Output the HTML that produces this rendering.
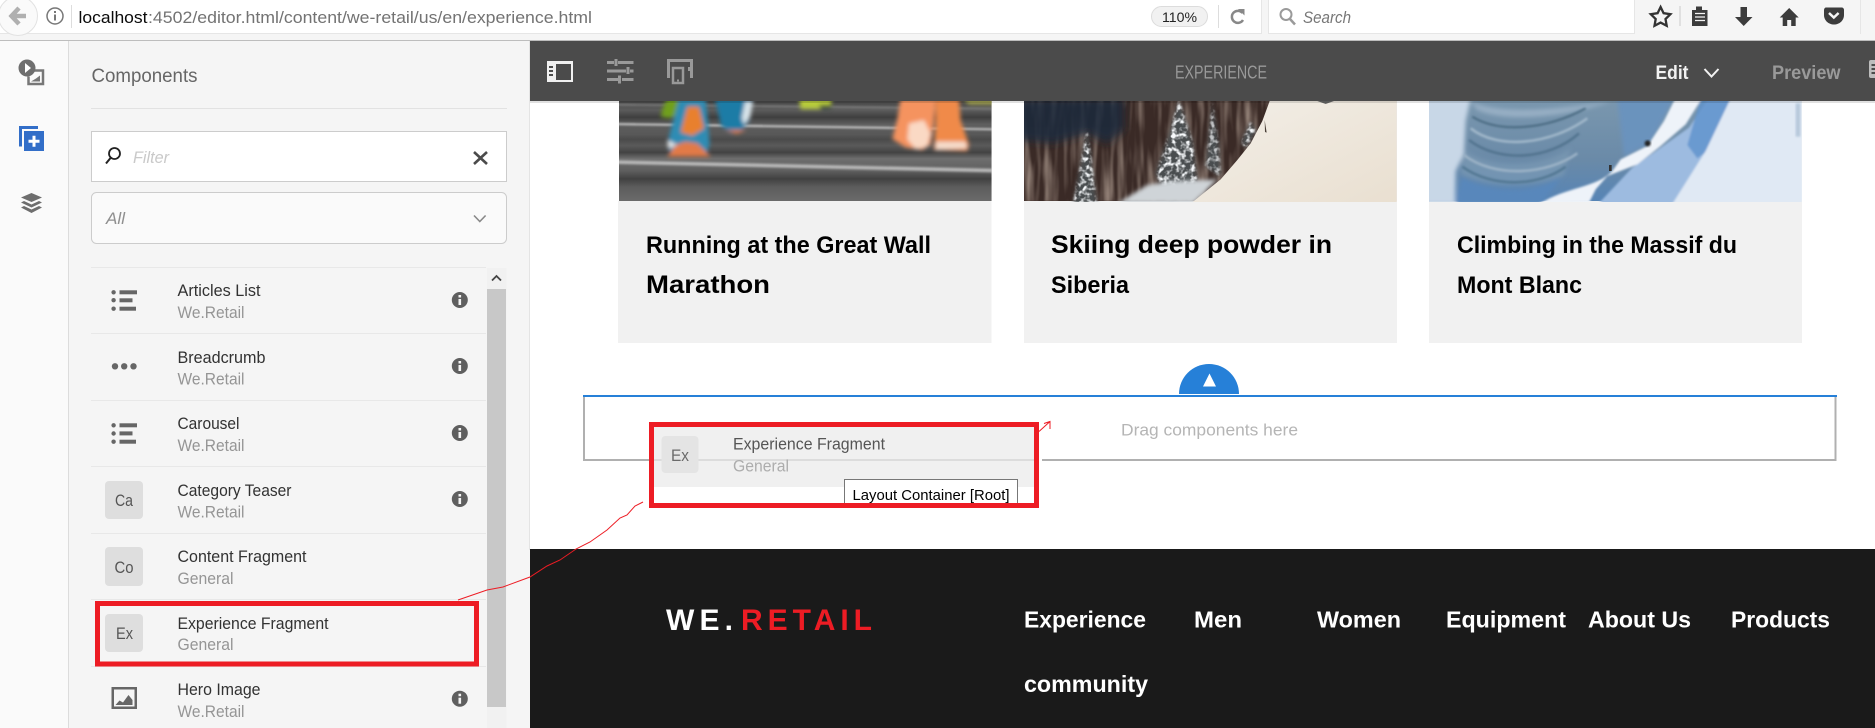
<!DOCTYPE html>
<html lang="en"><head><meta charset="utf-8"><title>AEM editor</title>
<style>html,body{margin:0;padding:0;background:#fff;width:1875px;height:728px;overflow:hidden}svg{display:block}text{font-family:"Liberation Sans",sans-serif}</style></head><body>
<svg xmlns="http://www.w3.org/2000/svg" width="1875" height="728" viewBox="0 0 1875 728">
<defs>
<filter id="b0" x="-20%" y="-20%" width="140%" height="140%"><feGaussianBlur stdDeviation="3"/></filter>
<filter id="b1" x="-20%" y="-20%" width="140%" height="140%"><feGaussianBlur stdDeviation="6"/></filter>
<filter id="b2" x="-20%" y="-20%" width="140%" height="140%"><feGaussianBlur stdDeviation="12"/></filter>
<filter id="streak" x="0" y="0" width="100%" height="100%"><feTurbulence type="fractalNoise" baseFrequency=".05 .006" numOctaves="2" seed="3"/><feColorMatrix values="0 0 0 0 .62  0 0 0 0 .5  0 0 0 0 .42  1.8 0 0 0 -.75"/><feGaussianBlur stdDeviation="1.500"/></filter>
<filter id="speck" x="-10%" y="-10%" width="120%" height="120%"><feTurbulence type="fractalNoise" baseFrequency=".07" numOctaves="2" seed="8"/><feColorMatrix values="0 0 0 0 .93  0 0 0 0 .95  0 0 0 0 .97  3.500 0 0 0 -1.500" result="n"/><feGaussianBlur in="SourceAlpha" stdDeviation="4" result="a"/><feComposite in="n" in2="a" operator="in"/></filter>
<clipPath id="c"><rect x="0" y="3" width="1118" height="303"/></clipPath>
<clipPath id="tt"><rect x="840" y="470" width="190" height="35"/></clipPath>
<linearGradient id="road" x1="0" y1="0" x2="0" y2="1">
<stop offset="0" stop-color="#444"/><stop offset=".1" stop-color="#5c5c5c"/><stop offset=".17" stop-color="#3f3f3f"/><stop offset=".24" stop-color="#5e5e5e"/><stop offset=".34" stop-color="#585858"/><stop offset=".39" stop-color="#4a4a4a"/><stop offset=".45" stop-color="#5a5a5a"/><stop offset=".52" stop-color="#434343"/><stop offset=".58" stop-color="#6e6e6e"/><stop offset=".7" stop-color="#5f5f5f"/><stop offset=".78" stop-color="#414141"/><stop offset=".86" stop-color="#5c5c5c"/><stop offset="1" stop-color="#6a6a6a"/></linearGradient>
<linearGradient id="snow" x1="0" y1="0" x2="1" y2="1"><stop offset="0" stop-color="#f3efe8"/><stop offset="1" stop-color="#e9dfd0"/></linearGradient>
<linearGradient id="ice" x1="0" y1="0" x2="0" y2="1"><stop offset="0" stop-color="#7a97ae"/><stop offset=".6" stop-color="#6a8aa8"/><stop offset="1" stop-color="#5684b5"/></linearGradient>
</defs>

<!-- browser chrome -->
<rect x="0" y="0" width="1875" height="41" fill="#f5f5f5"/>
<rect x="0" y="0" width="1261" height="33" fill="#fff"/>
<rect x="1269" y="0" width="365" height="33" fill="#fff"/>
<rect x="0" y="33" width="1261" height="1" fill="#e6e6e6"/>
<rect x="1269" y="33" width="365" height="1" fill="#e6e6e6"/>
<rect x="1261" y="0" width="1" height="34" fill="#e6e6e6"/><rect x="1268" y="0" width="1" height="34" fill="#e6e6e6"/><rect x="1634" y="0" width="1" height="34" fill="#e6e6e6"/>
<rect x="0" y="40" width="1875" height="1" fill="#bdbdbd"/>
<circle cx="18" cy="16" r="19.5" fill="#fafafa" stroke="#e2e2e2"/>
<path d="M19 8 11.500 16l7.500 8M12 16H26" fill="none" stroke="#b0b0b0" stroke-width="4.500"/>
<circle cx="55" cy="16" r="8" fill="none" stroke="#777" stroke-width="1.500"/>
<rect x="54" y="14.500" width="2" height="6" fill="#777"/><rect x="54" y="11" width="2" height="2" fill="#777"/>
<rect x="71" y="5" width="1" height="23" fill="#ddd"/>
<text x="78.500" y="23" font-size="17" fill="#0a0a0a" textLength="69" lengthAdjust="spacingAndGlyphs">localhost</text>
<text x="148" y="23" font-size="17" fill="#737373" textLength="444" lengthAdjust="spacingAndGlyphs">:4502/editor.html/content/we-retail/us/en/experience.html</text>
<rect x="1151.500" y="6.500" width="56" height="20" rx="10" fill="#f1f1f1" stroke="#dcdcdc"/>
<text x="1162" y="22" font-size="14" fill="#222" textLength="35" lengthAdjust="spacingAndGlyphs">110%</text>
<rect x="1218" y="5" width="1" height="23" fill="#ddd"/>
<path d="M1242.500 13a6 6 0 1 0 .5 7" fill="none" stroke="#888" stroke-width="2.500"/><path d="M1238 9h6.500v6.500z" fill="#888"/>
<circle cx="1286" cy="14.500" r="5.500" fill="none" stroke="#9a9a9a" stroke-width="2"/><path d="M1290 19l5 5.500" stroke="#9a9a9a" stroke-width="2.500"/>
<text x="1303" y="23" font-size="17" font-style="italic" fill="#777" textLength="48" lengthAdjust="spacingAndGlyphs">Search</text>
<path d="M1660.600 7l3 6.200 6.800 1-4.900 4.800 1.200 6.800-6.100-3.200-6.100 3.200 1.200-6.800-4.900-4.800 6.800-1z" fill="none" stroke="#333" stroke-width="2.300"/>
<rect x="1679.500" y="6" width="1" height="20" fill="#ccc"/>
<path d="M1692 10h4v-3.500h6V10h5.500v16H1692z" fill="#3c3c3c"/><path d="M1695 13.500h10M1695 17h10M1695 20.500h10" stroke="#f5f5f5" stroke-width="1.200"/>
<path d="M1740.500 7h6.500v10h5.500l-8.800 9-8.700-9h5.500z" fill="#3c3c3c"/>
<path d="M1789.200 8l9.500 9.500h-3V26h-4.500v-6h-4v6h-4.500v-8.500h-3z" fill="#3c3c3c"/>
<path d="M1826 7.500h15.500c1.500 0 2.500 1 2.500 2.500v5c0 5.500-4.500 9.500-10 9.500s-10-4-10-9.500v-5c0-1.500 1-2.500 2-2.500z" fill="#3c3c3c"/><path d="M1829 13l4.800 4.500 4.800-4.500" fill="none" stroke="#f5f5f5" stroke-width="2.500"/>
<rect x="1860" y="0" width="1" height="34" fill="#e6e6e6"/>

<!-- left rail + panel -->
<rect x="0" y="41" width="69" height="687" fill="#fafafa"/>
<rect x="68" y="41" width="1" height="687" fill="#dcdcdc"/>
<rect x="69" y="41" width="461" height="687" fill="#f5f5f5"/>
<path d="M34 70.500h9v13.500H28.500V76.500" fill="none" stroke="#777" stroke-width="2.500"/><path d="M31 81.500h9v-6l-4 3z" fill="#777"/>
<circle cx="27" cy="68" r="8.500" fill="#6e6e6e"/><path d="M25 63l6 5-6 5z" fill="#fff"/>
<path d="M38 127.500H20.500v19" fill="none" stroke="#326ec8" stroke-width="3"/><rect x="24" y="131" width="20" height="20" fill="#326ec8"/><path d="M28.500 141.200h11M34 135.800v11" stroke="#fff" stroke-width="3"/>
<g fill="#6e6e6e"><path d="M31.500 193l10.500 4.500-10.500 4.500-10.500-4.500z"/><path d="M21 202.500l3-1.500 7.500 3.500 7.500-3.500 3 1.500-10.500 5z"/><path d="M21 207.500l3-1.500 7.500 3.500 7.500-3.500 3 1.500-10.500 5.500z"/></g>

<text x="91.500" y="82" font-size="19" fill="#666" textLength="106" lengthAdjust="spacingAndGlyphs">Components</text>
<rect x="91" y="108" width="416" height="1" fill="#e2e2e2"/>
<rect x="91.500" y="131.500" width="415" height="50" fill="#fff" stroke="#ccc"/>
<circle cx="114.500" cy="153.500" r="5.500" fill="none" stroke="#222" stroke-width="1.800"/><path d="M110.500 158l-4.500 5.500" stroke="#222" stroke-width="2"/>
<text x="133" y="163" font-size="17" font-style="italic" fill="#c9c9c9" textLength="36" lengthAdjust="spacingAndGlyphs">Filter</text>
<path d="M474 152l13 12M487 152l-13 12" stroke="#4b4b4b" stroke-width="2.600"/>
<rect x="91.500" y="192.500" width="415" height="51" rx="5" fill="#fafafa" stroke="#ccc"/>
<text x="106" y="224" font-size="17" font-style="italic" fill="#8f8f8f" textLength="19" lengthAdjust="spacingAndGlyphs">All</text>
<path d="M474 215.500l5.800 6 5.800-6" fill="none" stroke="#888" stroke-width="1.600"/>

<!-- list -->
<rect x="91" y="267" width="395" height="1" fill="#e8e8e8"/>
<rect x="91" y="333" width="395" height="1" fill="#e8e8e8"/>
<rect x="91" y="400" width="395" height="1" fill="#e8e8e8"/>
<rect x="91" y="466" width="395" height="1" fill="#e8e8e8"/>
<rect x="91" y="533" width="395" height="1" fill="#e8e8e8"/>
<rect x="91" y="599" width="395" height="1" fill="#e8e8e8"/>
<rect x="91" y="666" width="395" height="1" fill="#e8e8e8"/>
<rect x="487" y="268" width="19.500" height="460" fill="#f1f1f1"/>
<rect x="487" y="289" width="19" height="418" fill="#c8c8c8"/>
<path d="M492 280.500l4.500-4.500 4.500 4.500" fill="none" stroke="#444" stroke-width="1.800"/>

<g fill="#666">
<circle cx="113.600" cy="292.300" r="2.200"/><circle cx="113.600" cy="300.200" r="2.200"/><circle cx="113.600" cy="308.700" r="2.200"/>
<rect x="119.500" y="290.300" width="17.500" height="4"/><rect x="119.500" y="298.300" width="13" height="4"/><rect x="119.500" y="306.700" width="16.500" height="4"/>
<circle cx="115" cy="366.300" r="3.200"/><circle cx="124.200" cy="366.300" r="3.200"/><circle cx="133.500" cy="366.300" r="3.200"/>
<circle cx="113.600" cy="425.300" r="2.200"/><circle cx="113.600" cy="433.500" r="2.200"/><circle cx="113.600" cy="441.700" r="2.200"/>
<rect x="119.500" y="423.300" width="17.500" height="4"/><rect x="119.500" y="431.400" width="13" height="4"/><rect x="119.500" y="439.700" width="16.500" height="4"/>
<path d="M111.500 687h25.500v22h-25.500zm2.500 2.500v17h20.500v-17z" fill-rule="evenodd"/>
<path d="M115.500 705l4-4.500 3.500 2 5.500-7.500 4 5v5z"/>
</g>
<g fill="#dedede"><rect x="105" y="481" width="38" height="38" rx="4"/><rect x="105" y="547" width="38" height="39" rx="4"/><rect x="105" y="614" width="38" height="38" rx="4"/></g>
<g fill="#555" font-size="17">
<text x="115" y="506" textLength="18" lengthAdjust="spacingAndGlyphs">Ca</text>
<text x="114.500" y="573" textLength="19" lengthAdjust="spacingAndGlyphs">Co</text>
<text x="116" y="639" textLength="17" lengthAdjust="spacingAndGlyphs">Ex</text>
</g>
<g font-size="17" fill="#323232">
<text x="177.500" y="296" textLength="83" lengthAdjust="spacingAndGlyphs">Articles List</text>
<text x="177.500" y="363" textLength="88" lengthAdjust="spacingAndGlyphs">Breadcrumb</text>
<text x="177.500" y="429" textLength="62" lengthAdjust="spacingAndGlyphs">Carousel</text>
<text x="177.500" y="496" textLength="114" lengthAdjust="spacingAndGlyphs">Category Teaser</text>
<text x="177.500" y="562" textLength="129" lengthAdjust="spacingAndGlyphs">Content Fragment</text>
<text x="177.500" y="629" textLength="151" lengthAdjust="spacingAndGlyphs">Experience Fragment</text>
<text x="177.500" y="695" textLength="83" lengthAdjust="spacingAndGlyphs">Hero Image</text>
</g>
<g font-size="17" fill="#959595">
<text x="177.500" y="318" textLength="67" lengthAdjust="spacingAndGlyphs">We.Retail</text>
<text x="177.500" y="384.500" textLength="67" lengthAdjust="spacingAndGlyphs">We.Retail</text>
<text x="177.500" y="451" textLength="67" lengthAdjust="spacingAndGlyphs">We.Retail</text>
<text x="177.500" y="517.500" textLength="67" lengthAdjust="spacingAndGlyphs">We.Retail</text>
<text x="177.500" y="584" textLength="56" lengthAdjust="spacingAndGlyphs">General</text>
<text x="177.500" y="650" textLength="56" lengthAdjust="spacingAndGlyphs">General</text>
<text x="177.500" y="717" textLength="67" lengthAdjust="spacingAndGlyphs">We.Retail</text>
</g>
<g fill="#5f5f5f"><circle cx="459.800" cy="300" r="8"/><circle cx="459.800" cy="366" r="8"/><circle cx="459.800" cy="433" r="8"/><circle cx="459.800" cy="499" r="8"/><circle cx="459.800" cy="698.700" r="8"/></g>
<g fill="#f5f5f5"><rect x="458.500" y="299" width="2.600" height="6"/><rect x="458.500" y="295" width="2.600" height="2.500"/><rect x="458.500" y="365" width="2.600" height="6"/><rect x="458.500" y="361" width="2.600" height="2.500"/><rect x="458.500" y="432" width="2.600" height="6"/><rect x="458.500" y="428" width="2.600" height="2.500"/><rect x="458.500" y="498" width="2.600" height="6"/><rect x="458.500" y="494" width="2.600" height="2.500"/><rect x="458.500" y="697.700" width="2.600" height="6"/><rect x="458.500" y="693.700" width="2.600" height="2.500"/></g>

<!-- main content -->
<rect x="530" y="41" width="1345" height="687" fill="#fff"/>
<rect x="529" y="41" width="1" height="509" fill="#e4e4e4"/>

<!-- cards -->
<rect x="618" y="201" width="373.500" height="142" fill="#f1f1f1"/>
<rect x="1024" y="201" width="373" height="142" fill="#f1f1f1"/>
<rect x="1429" y="201" width="373" height="142" fill="#f1f1f1"/>

<!-- image 1: track -->
<g transform="translate(619,100) scale(.33333)" clip-path="url(#c)">
<rect width="1118" height="303" fill="url(#road)"/>
<g filter="url(#b0)">
<path d="M-20 14L1140 26" stroke="#8c8c8c" stroke-width="4"/>
<path d="M-20 72L1140 88" stroke="#dcdcdc" stroke-width="5"/>
<path d="M-20 186L1140 212" stroke="#b8b8b8" stroke-width="11"/>
</g>
<g filter="url(#b1)">
<path d="M125 50l6-25 14-30h32l-2 50-22 10z" fill="#6f9f1c"/>
<path d="M540 -5h98l-3 32h-90z" fill="#b8cc3a"/><path d="M600 15h38l-3 13h-30z" fill="#3a4a3a"/>
<path d="M1030 -5h100v18h-80z" fill="#a8a850"/>
<path d="M180 -5h80l12 135-8 30h-110l-9-30z" fill="#2e8cb4"/>
<path d="M205 20h35l15 65-35 22-35-10z" fill="#e8802f"/>
<path d="M145 170l25-35 30-10 35 5 40 40z" fill="#e27a46"/>
<path d="M145 120l30 15-28 10z" fill="#e8e8e8"/>
<path d="M288 -5h113l-10 68-25 30-30 8-30-25z" fill="#1f7ba6"/>
<path d="M378 5h24l-8 45-18 25-8-20z" fill="#d8e4ea"/>
<path d="M318 90h65l-30 12z" fill="#d87842"/>
<path d="M845 -5h105l-5 68-10 70-25 17-50-8-40-25 15-60z" fill="#f5935f"/>
<path d="M870 70l45-10 20 40-10 40-35 8-25-30z" fill="#fad9c4"/>
<path d="M950 -5h70l5 68 25 70-5 20-100-3 5-70z" fill="#f08a48"/>
<path d="M950 125l90 0 5 20-95 5z" fill="#f5dccb"/>
</g></g>

<!-- image 2: forest -->
<g transform="translate(1024,100) scale(.33333)" clip-path="url(#c)">
<rect width="1118" height="303" fill="#3a2a26"/>
<rect width="800" height="303" filter="url(#streak)" opacity=".75"/>
<path d="M-20 -5h320v95l-50 40-60-30-100 30-110-10z" fill="#1c2c3c" opacity=".85" filter="url(#b2)"/>
<g filter="url(#b1)" fill="#4a4d4f">
<path d="M190 85l28 225h-70z"/>
<path d="M465 0l40 125 15 120-50 40-30 15-25-40-20-40 35-100z"/>
<path d="M565 5l20 135 5 90-45-30z"/>
<path d="M680 65l15 30-30 50-12-20z"/>
</g>
<g filter="url(#speck)" fill="#000">
<path d="M190 85l28 225h-70z"/>
<path d="M465 0l40 125 15 120-50 40-30 15-25-40-20-40 35-100z"/>
<path d="M565 5l20 135 5 90-45-30z" opacity=".7"/>
<path d="M680 65l15 30-30 50-12-20z"/>
</g>
<path d="M280 310l90-55 70-12 140-5-70 72z" fill="#cfd4d8" filter="url(#b1)"/>
<path d="M740 -5h385v320H495l95-77 50-58 40-50 35-67z" fill="url(#snow)"/>
<path d="M880 3h50l-25 9z" fill="#666"/>
<path d="M722 60l6 38-5-2z" fill="#4a4038"/>
</g>

<!-- image 3: ice -->
<g transform="translate(1429,100) scale(.33333)" clip-path="url(#c)">
<rect width="1118" height="303" fill="url(#ice)"/>
<g filter="url(#b1)">
<path d="M-20 -5h145l-15 68-5 100-25 50-2 100H-20z" fill="#c8d7e7"/>
<path d="M125 5c110 45 300 15 420 0-130 45-310 65-400 25z" fill="#97afc4"/>
<path d="M105 150c80 60 240 50 320-5l-20 80c-90 40-230 40-310-5z" fill="#7f9cb5" opacity=".6"/>
<path d="M78 315l20-82c100 50 210 50 300 0l-65 82z" fill="#5887bb"/>
<path d="M565 -5h170l-70 135-80 40z" fill="#6a93bd"/>
</g>
<g filter="url(#b0)" fill="none">
<path d="M130 50c80 50 220 40 340-25" stroke="#47687f" stroke-width="6"/>
<path d="M125 85c80 65 240 50 350-30" stroke="#a5bbcd" stroke-width="7"/>
<path d="M120 120c90 70 240 60 330-20" stroke="#50718c" stroke-width="7"/>
<path d="M105 165c90 70 250 60 340-5" stroke="#a0b6c9" stroke-width="7"/>
<path d="M100 200c90 65 230 60 310 0" stroke="#507590" stroke-width="7"/>
</g>
<g filter="url(#b0)">
<path d="M500 320l110-117 170-120 60-90h75l-60 160-70 167z" fill="#9dbbe0"/>
<path d="M815 -5h90l-60 150-40 30-30-40z" fill="#5f92cc" opacity=".8"/>
<path d="M725 320l105-167 75-158h225v325z" fill="#e0e9f4"/>
<path d="M335 310c70-47 170-47 215-97l25-35 80-40 50-75 35-70h80l-50 80-75 65-70 55-90 35-35 40-20 40z" fill="#eef3f9"/>
</g>
<circle cx="656" cy="130" r="9" fill="#222" filter="url(#b0)"/><rect x="540" y="195" width="8" height="18" fill="#333"/>
<rect x="1100" y="10" width="14" height="100" fill="#b7c9dc" filter="url(#b0)"/>
</g>

<g font-size="24" font-weight="bold" fill="#000">
<text x="646" y="253" textLength="285" lengthAdjust="spacingAndGlyphs">Running at the Great Wall</text>
<text x="646" y="293" textLength="124" lengthAdjust="spacingAndGlyphs" font-size="25">Marathon</text>
<text x="1051" y="253" textLength="281" lengthAdjust="spacingAndGlyphs" font-size="25">Skiing deep powder in</text>
<text x="1051" y="293" textLength="78" lengthAdjust="spacingAndGlyphs">Siberia</text>
<text x="1457" y="253" textLength="280" lengthAdjust="spacingAndGlyphs">Climbing in the Massif du</text>
<text x="1457" y="293" textLength="125" lengthAdjust="spacingAndGlyphs">Mont Blanc</text>
</g>

<!-- toolbar -->
<rect x="530" y="101" width="1345" height="2" fill="#000" opacity=".12"/>
<rect x="530" y="41" width="1345" height="60" fill="#4b4b4b"/>
<rect x="547" y="61" width="26" height="21" fill="#f0f0f0"/><rect x="556" y="64" width="15" height="16" fill="#4b4b4b"/>
<g fill="#4b4b4b"><rect x="549" y="66" width="4" height="2"/><rect x="549" y="70" width="4" height="2"/><rect x="549" y="74" width="4" height="2"/></g>
<g fill="#999"><rect x="607" y="61" width="7" height="3"/><rect x="618" y="61" width="15.500" height="3"/><rect x="614.500" y="59" width="3" height="7"/>
<rect x="607" y="69.500" width="19" height="3"/><rect x="630" y="69.500" width="3.500" height="3"/><rect x="626.500" y="67" width="3" height="7"/>
<rect x="607" y="78" width="11" height="3"/><rect x="622" y="78" width="11.500" height="3"/><rect x="618" y="75.500" width="3" height="8"/></g>
<path d="M668.500 78V60.500h23V78" fill="none" stroke="#999" stroke-width="3"/>
<rect x="673" y="68" width="10" height="15" fill="none" stroke="#999" stroke-width="2.500"/><rect x="677" y="79.500" width="2" height="2" fill="#999"/>
<rect x="688" y="67" width="2" height="4" fill="#999"/>
<text x="1175" y="78.500" font-size="18" fill="#999" textLength="92" lengthAdjust="spacingAndGlyphs">EXPERIENCE</text>
<text x="1655.500" y="79" font-size="19" font-weight="bold" fill="#f2f2f2" textLength="33" lengthAdjust="spacingAndGlyphs">Edit</text>
<path d="M1704.500 69l7 7.500 7-7.500" fill="none" stroke="#f2f2f2" stroke-width="2"/>
<text x="1772" y="79" font-size="19" font-weight="bold" fill="#999" textLength="68.500" lengthAdjust="spacingAndGlyphs">Preview</text>
<rect x="1869" y="60" width="10" height="18" rx="2" fill="#bdbdbd"/><rect x="1871.500" y="64" width="6" height="2" fill="#4b4b4b"/><rect x="1871.500" y="68" width="6" height="2" fill="#4b4b4b"/><rect x="1871.500" y="72" width="6" height="2" fill="#4b4b4b"/>

<!-- drop zone -->
<path d="M1179 394a30 30 0 0 1 60 0z" fill="#2680d8"/>
<path d="M1209.500 373.500l6.500 13h-13z" fill="#fff"/>
<rect x="584" y="396" width="1251.500" height="64" fill="#fff" stroke="#b0b0b0" stroke-width="2"/>
<rect x="583" y="395" width="1254" height="2" fill="#2680d8"/>
<text x="1121" y="435.500" font-size="17" fill="#b5b5b5" textLength="177" lengthAdjust="spacingAndGlyphs">Drag components here</text>

<!-- ghost -->
<rect x="1039" y="424" width="3" height="64" fill="#fff"/>
<rect x="652" y="427" width="384" height="60" fill="#f0f0f0"/>
<rect x="652" y="459" width="384" height="2" fill="#dcdcdc"/>
<rect x="652" y="487" width="384" height="20" fill="#fff"/>
<rect x="661.500" y="436" width="37" height="37" rx="4" fill="#e4e4e4"/>
<text x="671" y="461" font-size="17" fill="#6a6a6a" textLength="18" lengthAdjust="spacingAndGlyphs">Ex</text>
<text x="733" y="449.500" font-size="17" fill="#555" textLength="152" lengthAdjust="spacingAndGlyphs">Experience Fragment</text>
<text x="733" y="471.500" font-size="17" fill="#adadad" textLength="56" lengthAdjust="spacingAndGlyphs">General</text>
<g clip-path="url(#tt)"><rect x="844.500" y="479.500" width="173" height="30" fill="#fff" stroke="#777"/>
<text x="852.500" y="500" font-size="15" fill="#000" textLength="157" lengthAdjust="spacingAndGlyphs">Layout Container [Root]</text></g>

<!-- footer -->
<rect x="530" y="549" width="1345" height="179" fill="#1a1a1a"/>
<text x="666" y="630" font-size="30" font-weight="bold" fill="#fff" textLength="67" lengthAdjust="spacing">WE.</text>
<text x="741" y="630" font-size="30" font-weight="bold" fill="#ed1c24" textLength="131" lengthAdjust="spacing">RETAIL</text>
<g font-size="23" font-weight="bold" fill="#fff">
<text x="1024" y="627.500" textLength="122" lengthAdjust="spacingAndGlyphs">Experience</text>
<text x="1194" y="627.500" textLength="48" lengthAdjust="spacingAndGlyphs">Men</text>
<text x="1317" y="627.500" textLength="84" lengthAdjust="spacingAndGlyphs">Women</text>
<text x="1446" y="627.500" textLength="120" lengthAdjust="spacingAndGlyphs">Equipment</text>
<text x="1588" y="627.500" textLength="103" lengthAdjust="spacingAndGlyphs">About Us</text>
<text x="1731" y="627.500" textLength="99" lengthAdjust="spacingAndGlyphs">Products</text>
<text x="1024" y="692" textLength="124" lengthAdjust="spacingAndGlyphs">community</text>
</g>

<!-- red annotations -->
<rect x="97.500" y="603.500" width="379" height="60.500" fill="none" stroke="#ed1c24" stroke-width="5"/>
<rect x="651.500" y="424.500" width="385" height="81" fill="none" stroke="#ed1c24" stroke-width="5"/>
<path d="M458 600 487 590 503 587 530 577 547 566 560 560 576 549 590 542 607 530 620 518 627 515 635 506 643 502" fill="none" stroke="#ed1c24" stroke-width="1"/>
<path d="M1039 431.500l11-10M1044 423.500l6-2v7.500" fill="none" stroke="#ed1c24" stroke-width="1"/>
</svg>
</body></html>
